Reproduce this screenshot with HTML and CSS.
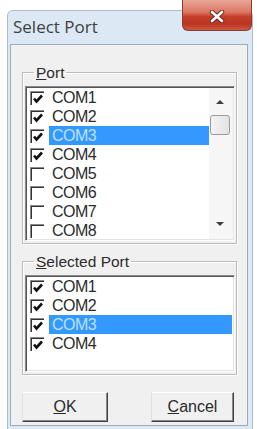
FILE: index.html
```html
<!DOCTYPE html>
<html>
<head>
<meta charset="utf-8">
<link rel="stylesheet" href="styles.css">
</head>
<body>
<div class="window">
  <div class="titlebar"><span class="title">Select Port</span></div>
  <div class="close">
    <svg width="16" height="13" viewBox="0 0 16 13">
      <path d="M3 2 L13 11 M13 2 L3 11" stroke="#6b2a22" stroke-width="4.5" stroke-linecap="round"/>
      <path d="M3 2 L13 11 M13 2 L3 11" stroke="#ffffff" stroke-width="2.6" stroke-linecap="round"/>
    </svg>
  </div>
  <div class="client">
    <fieldset class="group">
      <legend><u>P</u>ort</legend>
      <div class="listbox lb1">
        <div class="rows">
          <div class="row"><span class="cb"><svg width="12" height="12" viewBox="0 0 12 12"><path d="M2 5.5 L4.5 8.5 L10 2.5" fill="none" stroke="#111" stroke-width="2.6"/></svg></span><span class="label">COM1</span></div>
          <div class="row"><span class="cb"><svg width="12" height="12" viewBox="0 0 12 12"><path d="M2 5.5 L4.5 8.5 L10 2.5" fill="none" stroke="#111" stroke-width="2.6"/></svg></span><span class="label">COM2</span></div>
          <div class="row sel"><span class="cb"><svg width="12" height="12" viewBox="0 0 12 12"><path d="M2 5.5 L4.5 8.5 L10 2.5" fill="none" stroke="#111" stroke-width="2.6"/></svg></span><span class="label">COM3</span></div>
          <div class="row"><span class="cb"><svg width="12" height="12" viewBox="0 0 12 12"><path d="M2 5.5 L4.5 8.5 L10 2.5" fill="none" stroke="#111" stroke-width="2.6"/></svg></span><span class="label">COM4</span></div>
          <div class="row"><span class="cb"></span><span class="label">COM5</span></div>
          <div class="row"><span class="cb"></span><span class="label">COM6</span></div>
          <div class="row"><span class="cb"></span><span class="label">COM7</span></div>
          <div class="row"><span class="cb"></span><span class="label">COM8</span></div>
        </div>
        <div class="scrollbar">
          <div class="sbtn up"><span class="tri-up"></span></div>
          <div class="thumb"></div>
          <div class="track"></div>
          <div class="sbtn down"><span class="tri-down"></span></div>
        </div>
      </div>
    </fieldset>
    <fieldset class="group g2">
      <legend><u>S</u>elected Port</legend>
      <div class="listbox lb2">
        <div class="rows">
          <div class="row"><span class="cb"><svg width="12" height="12" viewBox="0 0 12 12"><path d="M2 5.5 L4.5 8.5 L10 2.5" fill="none" stroke="#111" stroke-width="2.6"/></svg></span><span class="label">COM1</span></div>
          <div class="row"><span class="cb"><svg width="12" height="12" viewBox="0 0 12 12"><path d="M2 5.5 L4.5 8.5 L10 2.5" fill="none" stroke="#111" stroke-width="2.6"/></svg></span><span class="label">COM2</span></div>
          <div class="row sel"><span class="cb"><svg width="12" height="12" viewBox="0 0 12 12"><path d="M2 5.5 L4.5 8.5 L10 2.5" fill="none" stroke="#111" stroke-width="2.6"/></svg></span><span class="label">COM3</span></div>
          <div class="row"><span class="cb"><svg width="12" height="12" viewBox="0 0 12 12"><path d="M2 5.5 L4.5 8.5 L10 2.5" fill="none" stroke="#111" stroke-width="2.6"/></svg></span><span class="label">COM4</span></div>
        </div>
      </div>
    </fieldset>
    <div class="buttons">
      <button class="btn ok"><u>O</u>K</button>
      <button class="btn cancel"><u>C</u>ancel</button>
    </div>
  </div>
</div>
</body>
</html>
```
FILE: styles.css
```css
* { box-sizing: border-box; }
html, body { margin: 0; padding: 0; background: #ffffff; }
body { font-family: "Liberation Sans", Arial, sans-serif; color: #2b2b2b; }

.window {
  position: relative;
  margin: 10px 0 0 7px;
  width: 246px;
  height: 419px;
  background: #dce9f5;
  border: 1px solid #aabdd2;
  border-bottom: none;
  border-radius: 6px 6px 0 0;
  padding: 0 4px 0 2px;
}
.titlebar {
  height: 33px;
  display: flex;
  align-items: center;
  padding-left: 3px;
  padding-bottom: 2px;
}
.title {
  font-family: "Open Sans", "Liberation Sans", sans-serif;
  font-size: 17px;
  color: #404040;
}
.close {
  position: absolute;
  left: 174px;
  top: -11px;
  width: 70px;
  height: 31px;
  border: 1px solid #8a3b30;
  border-top: none;
  border-radius: 0 0 6px 6px;
  background: linear-gradient(#e9a595 0%, #dc7864 40%, #c5402a 55%, #bb3520 80%, #cc5a44 100%);
  display: flex;
  align-items: center;
  justify-content: center;
  padding-top: 2px;
}
.client {
  height: 382px;
  background: #f0f0f0;
  border: 1px solid #9aabbd;
  padding: 20px 0 0 11px;
}
.group {
  margin: 0;
  width: 215px;
  border: 1px solid #bcbcbc;
  box-shadow: inset 1px 1px #ffffff, 1px 1px #ffffff;
  padding: 6px 1px 2px 2px;
  min-width: 0;
}
.g2 { margin-top: 10px; }
legend {
  font-size: 15.5px;
  line-height: 15px;
  padding: 0 2px;
  margin-left: 9px;
  color: #2b2b2b;
}
.listbox {
  display: flex;
  background: #fff;
  border: 1px solid;
  border-color: #8a8a8a #ffffff #ffffff #8a8a8a;
  box-shadow: inset 1px 1px #555, inset -1px -1px #e3e3e3;
  padding: 1px;
  overflow: hidden;
}
.lb1 { height: 155px; }
.lb2 { height: 97px; }
.rows { flex: 1; display: flex; flex-direction: column; }
.row {
  height: 19px;
  flex: none;
  display: flex;
  align-items: center;
  padding-left: 3px;
  font-size: 16px;
  letter-spacing: -0.5px;
}
.cb {
  width: 14px;
  height: 14px;
  flex: none;
  background: #fff;
  border-top: 1px solid #8a8a8a;
  border-left: 1px solid #8a8a8a;
  box-shadow: inset 1px 1px #333;
  display: flex;
  align-items: center;
  justify-content: center;
  padding: 1px 0 0 1px;
}
.label {
  flex: 1;
  height: 19px;
  line-height: 19px;
  margin-left: 5px;
  padding-left: 3px;
  color: #2b2b2b;
}
.sel .label { background: #3399ff; color: #bfe0ff; }
.lb2 .rows { margin-right: 1px; }
.scrollbar {
  width: 24px;
  flex: none;
  display: flex;
  flex-direction: column;
  background: #f6f6f6;
  padding-left: 1px;
}
.sbtn { display: flex; align-items: center; justify-content: center; width: 20px; }
.up { height: 27px; }
.down { height: 31px; }
.track { flex: 1; }
.tri-up { width: 0; height: 0; border-left: 4px solid transparent; border-right: 4px solid transparent; border-bottom: 4px solid #404040; }
.tri-down { width: 0; height: 0; border-left: 4px solid transparent; border-right: 4px solid transparent; border-top: 4px solid #404040; }
.thumb {
  width: 20px;
  height: 20px;
  border: 1px solid #9b9b9b;
  border-radius: 3px;
  background: linear-gradient(90deg, #f4f4f4, #e2e2e2);
}
.buttons {
  display: flex;
  justify-content: space-between;
  margin-top: 17px;
  padding-right: 13px;
}
.btn {
  height: 30px;
  font-family: "Liberation Sans", Arial, sans-serif;
  font-size: 16px;
  color: #2b2b2b;
  background: #f0f0f0;
  border: 1px solid;
  border-color: #ffffff #404040 #404040 #e0e0e0;
  box-shadow: inset -1px -1px #8a8a8a;
  padding: 0;
}
.ok { width: 86px; }
.cancel { width: 83px; }
```
